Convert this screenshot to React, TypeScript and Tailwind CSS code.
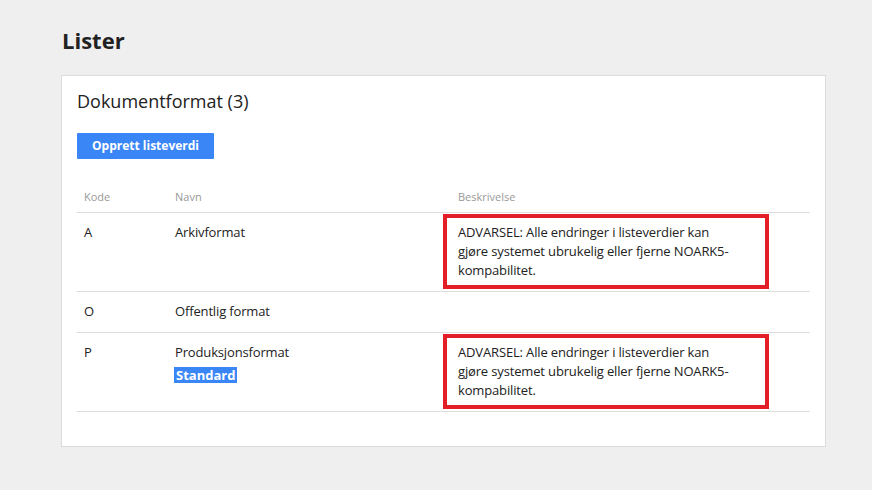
import React from "react";

const warn = "ADVARSEL: Alle endringer i listeverdier kan gjøre systemet ubrukelig eller fjerne NOARK5-kompabilitet.";

function Desc({ text }: { text: string }) {
  return (
    <div className="relative max-w-[280px]">
      <div className="absolute left-[-15px] top-[-9px] bottom-[-9px] w-[326px] border-[4px] border-[#e41e26] pointer-events-none" />
      {text}
    </div>
  );
}

export default function App() {
  const rows = [
    { kode: "A", navn: "Arkivformat", desc: warn, std: false },
    { kode: "O", navn: "Offentlig format", desc: "", std: false },
    { kode: "P", navn: "Produksjonsformat", desc: warn, std: true },
  ];
  return (
    <div
      className="min-h-[490px] w-full bg-[#efefef] pt-[25px] pl-[61px] text-[#222]"
      style={{ fontFamily: '"Open Sans", "Liberation Sans", sans-serif' }}
    >
      <h1 className="ml-[1px] text-[22px] font-bold leading-[30px] text-[#222]">Lister</h1>
      <div className="mt-[20px] w-[765px] border border-[#dcdcdc] bg-white px-[15px] pt-[13px] pb-[34px]">
        <h2 className="text-[18px] font-normal leading-[24px] text-[#222]">Dokumentformat (3)</h2>
        <button className="mt-[20px] h-[26px] rounded-[1px] bg-[#3b86f7] px-[15px] text-[12px] font-bold leading-[26px] text-white">
          Opprett listeverdi
        </button>
        <table className="mt-[30px] w-[733px] border-collapse text-left">
          <thead>
            <tr className="border-b border-[#dddddd]">
              <th className="w-[90px] pl-[7px] pb-[8px] pt-0 text-[11px] font-normal leading-[15px] text-[#999]">Kode</th>
              <th className="w-[276px] pl-[8px] pb-[8px] pt-0 text-[11px] font-normal leading-[15px] text-[#999]">Navn</th>
              <th className="pl-[15px] pb-[8px] pt-0 text-[11px] font-normal leading-[15px] text-[#999]">Beskrivelse</th>
            </tr>
          </thead>
          <tbody>
            {rows.map((r) => (
              <tr key={r.kode} className="border-b border-[#dddddd] align-top text-[13px] leading-[19px] tracking-[-0.15px]">
                <td className="pl-[7px] pt-[10px] pb-[11px]">{r.kode}</td>
                <td className="pl-[8px] pt-[10px] pb-[11px]">
                  <div>{r.navn}</div>
                  {r.std && (
                    <div className="-ml-[1px] mt-[5px] leading-[16px]">
                      <span className="inline-block bg-[#3b86f7] px-[2px] text-[13px] font-bold leading-[16px] tracking-normal text-white">Standard</span>
                    </div>
                  )}
                </td>
                <td className="pl-[15px] pt-[10px] pb-[11px]">{r.desc && <Desc text={r.desc} />}</td>
              </tr>
            ))}
          </tbody>
        </table>
      </div>
    </div>
  );
}
